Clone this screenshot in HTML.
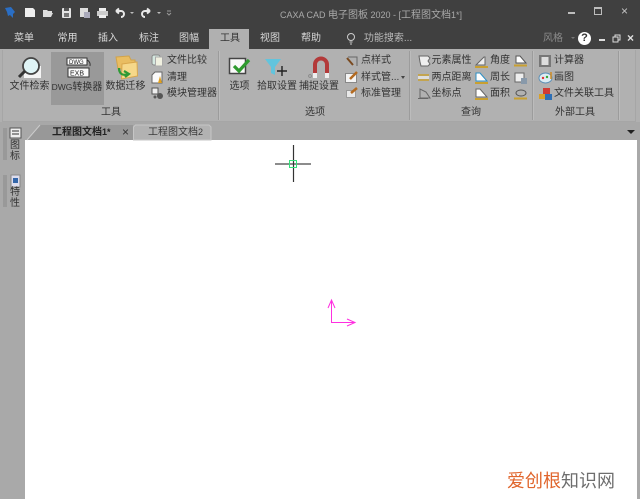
<!DOCTYPE html>
<html><head><meta charset="utf-8">
<style>
html,body{margin:0;padding:0;width:640px;height:499px;overflow:hidden;background:#fff}
body{position:relative;font-family:"Liberation Sans","Noto Sans CJK SC",sans-serif;font-size:10px;color:#333}
#w{position:absolute;left:0;top:0;width:640px;height:499px;overflow:hidden;filter:blur(.35px)}
.a{position:absolute}
.t{position:absolute;white-space:nowrap;line-height:14px;font-size:10px}
.c{text-align:center;transform:translateX(-50%)}
.m{position:absolute;white-space:nowrap;color:#d9d9d9;font-size:10px;line-height:14px;top:31px;transform:translateX(-50%)}
.l{font-size:8.5px}
svg{position:absolute;overflow:visible}
.sep{position:absolute;top:51px;height:69px;width:1px;background:#9c9c9c;border-right:1px solid #bcbcbc}
</style></head><body><div id="w">
<div class="a" style="left:0;top:0;width:640px;height:49px;background:#404040"></div>
<div class="a" style="left:0;top:49px;width:640px;height:74px;background:#b0b0b0"></div>
<div class="a" style="left:2px;top:50px;width:634px;height:72px;background:#b1b1b1;border:1px solid #a6a6a6;border-top:none;box-sizing:border-box"></div>
<div class="a" style="left:0;top:122px;width:640px;height:18px;background:#a8a8a8"></div>
<div class="a" style="left:0;top:140px;width:25px;height:359px;background:#a9a9a9"></div>
<div class="a" style="left:637px;top:140px;width:3px;height:359px;background:#a9a9a9"></div>
<div class="a" style="left:25px;top:140px;width:612px;height:359px;background:#fff"></div>
<!-- active tab -->
<div class="a" style="left:209px;top:29px;width:40px;height:21px;background:#b0b0b0"></div>
<!-- quick access -->
<svg style="left:0;top:0" width="180" height="26">
<path d="M5 8l6-1 4 5-2 2 0 4-3-3-2 1-1-4z" fill="#2a6ec4"/>
<path d="M25 8h8l2 2v7H25z" fill="#eee"/>
<path d="M43 10h4l1 1h4v2l1 0-2 4H43z" fill="#ddd"/>
<rect x="62" y="8" width="9" height="10" rx="1" fill="#e4e4e4"/><rect x="64" y="8" width="5" height="3" fill="#555"/><rect x="64" y="13" width="5" height="4" fill="#777"/>
<rect x="80" y="8" width="8" height="9" fill="#ddd"/><rect x="84" y="12" width="6" height="6" fill="#aab"/>
<rect x="99" y="8" width="7" height="3" fill="#eee"/><rect x="97" y="11" width="11" height="5" fill="#ccc"/><rect x="99" y="15" width="7" height="3" fill="#eee"/>
<path d="M116 11h5a3 3 0 010 6M116 11l3-2.500M116 11l3 2.500" stroke="#e8e8e8" stroke-width="2" fill="none"/>
<path d="M130 12h4l-2 2z" fill="#bbb"/>
<path d="M150 11h-5a3 3 0 000 6M150 11l-3-2.500M150 11l-3 2.500" stroke="#e8e8e8" stroke-width="2" fill="none"/>
<path d="M157 12h4l-2 2z" fill="#bbb"/>
<path d="M167 11h4M167 13l2 2 2-2" stroke="#999" stroke-width="1" fill="none"/>
</svg>
<div class="t" style="left:280px;top:8px;color:#a9a9a9"><span style="font-size:9px">CAXA CAD </span>电子图板<span style="font-size:9px"> 2020 - [</span>工程图文档<span style="font-size:9px">1*]</span></div>
<!-- window controls -->
<div class="a" style="left:568px;top:12px;width:7px;height:2px;background:#bdbdbd"></div>
<div class="a" style="left:594px;top:7px;width:6px;height:5px;border:1px solid #bdbdbd;border-top-width:2px"></div>
<div class="t" style="left:621px;top:4px;color:#c4c4c4;font-size:12px">×</div>
<!-- menu -->
<div class="m" style="left:24px;top:32px">菜单</div>
<div class="m" style="left:67.500px;top:32px">常用</div>
<div class="m" style="left:108px;top:32px">插入</div>
<div class="m" style="left:149px;top:32px">标注</div>
<div class="m" style="left:189px;top:32px">图幅</div>
<div class="m" style="left:230px;top:32px;color:#333">工具</div>
<div class="m" style="left:270px;top:32px">视图</div>
<div class="m" style="left:311px;top:32px">帮助</div>
<svg style="left:345px;top:32px" width="12" height="14"><circle cx="6" cy="5" r="3.500" fill="none" stroke="#ccc"/><path d="M4.500 10h3M5 12h2" stroke="#ccc"/></svg>
<div class="m" style="left:388px;top:32px;color:#bbb">功能搜索...</div>
<div class="m" style="left:553px;top:32px;color:#8b8b8b">风格</div>
<div class="a" style="left:571px;top:37px;border:2px solid transparent;border-top:2px solid #777"></div>
<div class="a" style="left:578px;top:32px;width:13px;height:13px;border-radius:50%;background:#fff;color:#333;font:bold 11px/13px 'Liberation Sans';text-align:center">?</div>
<div class="a" style="left:599px;top:39px;width:6px;height:2px;background:#ddd"></div>
<svg style="left:612px;top:34px" width="10" height="10"><rect x="1" y="3" width="5" height="5" fill="none" stroke="#ddd"/><path d="M3 3V1h5v5H6" fill="none" stroke="#ddd"/></svg>
<div class="t" style="left:627px;top:31px;color:#e0e0e0;font-size:12px;font-weight:bold">×</div>
<!-- tools group -->
<div class="a" style="left:51px;top:52px;width:53px;height:53px;background:#999"></div>
<svg style="left:0;top:50px" width="220" height="52">
<path d="M30 16h11v12H24l0-7z" fill="#f4f4f4"/>
<circle cx="31" cy="16" r="8" fill="#dff4f6" stroke="#444" stroke-width="1.800"/>
<path d="M25 21l-6 6" stroke="#333" stroke-width="3"/>
<rect x="67" y="8" width="20" height="7" fill="#fafafa" stroke="#333"/>
<rect x="68" y="18" width="21" height="9" fill="#fafafa" stroke="#333"/>
<text x="69" y="14" font-size="6" fill="#222" font-family="Liberation Sans">DWG</text>
<text x="70" y="25.500" font-size="7" fill="#222" font-family="Liberation Sans">EXB</text>
<path d="M87 10a5 5 0 013 6" stroke="#333" fill="none"/>
<path d="M116 7l13-1 2 4h4v8l-17 1z" fill="#e9bd62" stroke="#d1a34a"/>
<path d="M122 14l15-2 .5 14-16 3z" fill="#f6d88a" stroke="#d9a74d"/>
<path d="M119 18c0 6 4 8 9 6M124 21l5 3-4 3" stroke="#2f9a35" stroke-width="2.200" fill="none"/>
<rect x="152" y="5" width="8" height="10" rx="2" fill="#d5e8e0" stroke="#888"/><rect x="155.500" y="7" width="7" height="9" fill="#f0f0e0" stroke="#aaa"/>
<path d="M155 22h7v11h-10v-8z" fill="#fafafa" stroke="#666"/><path d="M160 26l-2 7h4z" fill="#e0a020"/>
<rect x="152" y="38" width="6" height="6" fill="#eee" stroke="#555"/><circle cx="160" cy="46" r="3" fill="#555"/><circle cx="155" cy="47" r="1.500" fill="#555"/>
</svg>
<div class="t c" style="left:29.500px;top:80px;">文件检索</div>
<div class="t c" style="left:77px;top:80px;"><span class="l">DWG</span>转换器</div>
<div class="t c" style="left:125.500px;top:80px;">数据迁移</div>
<div class="t" style="left:167px;top:54px">文件比较</div>
<div class="t" style="left:167px;top:71px">清理</div>
<div class="t" style="left:167px;top:87px">模块管理器</div>
<div class="t c" style="left:111px;top:106px">工具</div>
<div class="sep" style="left:218px"></div>
<!-- options group -->
<svg style="left:225px;top:55px" width="120" height="28">
<rect x="4.500" y="3.500" width="16" height="15" fill="#fafafa" stroke="#444" stroke-width="1.500"/>
<path d="M9 11l5 5 10-11" stroke="#2e9a2e" stroke-width="3.200" fill="none"/>
<path d="M40 4h16l-6 8v8l-4-2v-6z" fill="#62c4dd"/>
<path d="M57 11v10M52 16h10" stroke="#222" stroke-width="1.400"/>
<rect x="84" y="20" width="2" height="2" fill="#fff" stroke="#333" stroke-width=".5"/>
<path d="M90 20V9.500a6 6 0 0112 0V20" fill="none" stroke="#b33a3a" stroke-width="4"/>
<rect x="88" y="18" width="4" height="5" fill="#eee"/><rect x="100" y="18" width="4" height="5" fill="#eee"/>
</svg>
<div class="t c" style="left:239.500px;top:80px">选项</div>
<div class="t c" style="left:277px;top:80px">拾取设置</div>
<div class="t c" style="left:319px;top:80px">捕捉设置</div>
<svg style="left:344px;top:54px" width="18" height="48">
<path d="M4 3h9v9" fill="none" stroke="#666"/><path d="M3 4l6 7" stroke="#7a4a20" stroke-width="2"/>
<rect x="1.500" y="19.500" width="11" height="9" fill="#f4f4f4" stroke="#888"/><path d="M6 25l7-7" stroke="#b36a20" stroke-width="2.500"/>
<rect x="2.500" y="36.500" width="9" height="7" fill="#e8e8e8" stroke="#999"/><path d="M7 39l6-5" stroke="#b36a20" stroke-width="2.500"/>
</svg>
<div class="t" style="left:361px;top:54px">点样式</div>
<div class="t" style="left:361px;top:71px">样式管...</div>
<div class="a" style="left:401px;top:76px;border:2.500px solid transparent;border-top:3px solid #444"></div>
<div class="t" style="left:361px;top:87px">标准管理</div>
<div class="t c" style="left:315px;top:106px">选项</div>
<div class="sep" style="left:409px"></div>
<!-- query group -->
<svg style="left:415px;top:53px" width="125" height="50">
<path d="M4 3h9l2 2-2 3 2 3-2 2H6l-1-4z" fill="#eee" stroke="#666"/>
<rect x="3" y="23" width="11" height="3" fill="#ddd"/><path d="M3 22h11M3 27h11" stroke="#c9a030" stroke-width="1.500"/>
<path d="M5 36v9h10l-4-6zM3 45.500h10" fill="none" stroke="#666"/>
<path d="M69 4l-8 8h9V4z" fill="#eee" stroke="#666"/><path d="M60 14h13" stroke="#c9a030" stroke-width="2"/>
<path d="M61 20h4l7 8H61z" fill="#fff" stroke="#2b8fc4"/><path d="M60 30h13" stroke="#c9a030" stroke-width="2"/>
<path d="M61 36h4l7 8H61z" fill="#fff" stroke="#666"/><path d="M60 46h13" stroke="#c9a030" stroke-width="2"/>
<path d="M101 3h4l6 7h-10z" fill="#fff" stroke="#555"/><path d="M99 12.500h13" stroke="#c9a030" stroke-width="2"/>
<rect x="100" y="20" width="9" height="9" fill="#eee" stroke="#666"/><rect x="106" y="25" width="6" height="6" fill="#89a"/>
<path d="M101 40a5 3 0 0110 0 5 3 0 01-10 0z" fill="none" stroke="#555"/><path d="M99 45.500h13" stroke="#c9a030" stroke-width="2"/>
</svg>
<div class="t" style="left:431.500px;top:54px">元素属性</div>
<div class="t" style="left:431.500px;top:71px">两点距离</div>
<div class="t" style="left:431.500px;top:87px">坐标点</div>
<div class="t" style="left:490px;top:54px">角度</div>
<div class="t" style="left:490px;top:71px">周长</div>
<div class="t" style="left:490px;top:87px">面积</div>
<div class="t c" style="left:471px;top:106px">查询</div>
<div class="sep" style="left:532px"></div>
<!-- external tools -->
<svg style="left:538px;top:53px" width="18" height="50">
<rect x="1" y="2" width="12" height="12" fill="#777"/><rect x="3.500" y="4" width="7" height="8" fill="#ddd"/>
<ellipse cx="7.500" cy="25" rx="6.500" ry="5" fill="#dcebf2" stroke="#5b8fb5"/><circle cx="5" cy="25" r="1.200" fill="#d33"/><circle cx="9" cy="24" r="1.200" fill="#3a3"/><path d="M13 19v7" stroke="#d08a20" stroke-width="1.500"/>
<rect x="5" y="35" width="7" height="7" fill="#cf3b34"/><rect x="1" y="41" width="6" height="5" fill="#d9a028"/><rect x="7" y="41" width="7" height="6" fill="#2d6fb5"/>
</svg>
<div class="t" style="left:554px;top:54px">计算器</div>
<div class="t" style="left:554px;top:71px">画图</div>
<div class="t" style="left:554px;top:87px">文件关联工具</div>
<div class="t c" style="left:575px;top:106px">外部工具</div>
<div class="sep" style="left:618px"></div>
<!-- doc tabs -->
<svg style="left:25px;top:124px" width="190" height="16">
<path d="M2 16L15 1H108V16z" fill="#989898"/>
<path d="M2 16L15 1" stroke="#ccc" fill="none"/>
<path d="M108.500 16V3L110.500 1H184L186 3V16z" fill="#b2b2b2" stroke="#c6c6c6"/>
</svg>
<div class="t" style="left:52px;top:125px;font-weight:bold;color:#222">工程图文档<span style="font-size:9px">1*</span></div>
<div class="t" style="left:122px;top:125px;color:#333;font-size:12px">×</div>
<div class="t" style="left:148px;top:125px;color:#3a3a3a">工程图文档<span style="font-size:9px">2</span></div>
<div class="a" style="left:627px;top:130px;border:4px solid transparent;border-top:4px solid #222;border-bottom:none"></div>
<!-- left strip -->
<div class="a" style="left:3px;top:128px;width:4px;height:32px;background:#999"></div>
<div class="a" style="left:3px;top:175px;width:4px;height:32px;background:#999"></div>
<svg style="left:9px;top:127px" width="14" height="62">
<rect x="1" y="1" width="11" height="10" fill="#eee" stroke="#555"/><path d="M3 4h7M3 7h7" stroke="#333"/>
<rect x="2" y="48" width="9" height="12" fill="#dde" stroke="#888"/><rect x="4" y="51" width="5" height="5" fill="#36a"/>
</svg>
<div class="t" style="left:10px;top:140px;width:12px;line-height:11px;font-size:10px;white-space:normal">图<br>标</div>
<div class="t" style="left:10px;top:187px;width:12px;line-height:11px;font-size:10px;white-space:normal">特<br>性</div>
<!-- crosshair -->
<svg style="left:270px;top:140px" width="90" height="190">
<path d="M5 24H41" stroke="#666" stroke-width="1.500"/>
<path d="M23.500 5V42" stroke="#333" stroke-width="1.200"/>
<rect x="19.500" y="20.500" width="7" height="7" fill="none" stroke="#34e07a"/>
<path d="M61.500 160V182.500H84" stroke="#ff2fe0" fill="none"/>
<path d="M58 168L61.500 160L65 168" stroke="#ff2fe0" fill="none"/>
<path d="M77 179L85 182.500L77 186" stroke="#ff2fe0" fill="none"/>
</svg>
<!-- watermark -->
<div class="t" style="left:507px;top:470px;font-size:18px;line-height:22px;color:#e0652c">爱创根<span style="color:#6e6e6e">知识网</span></div>
</div></body></html>
